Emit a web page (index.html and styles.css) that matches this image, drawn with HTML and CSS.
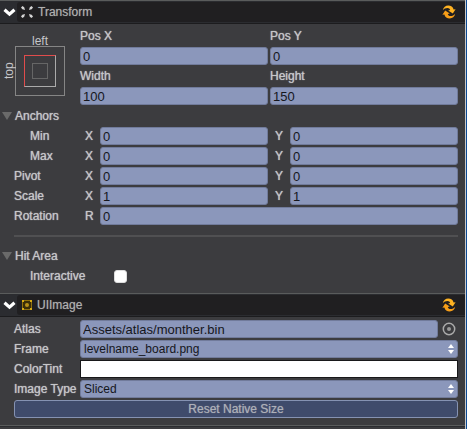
FILE: index.html
```html
<!DOCTYPE html>
<html lang="en">
<head>
<meta charset="utf-8">
<title>Inspector</title>
<link rel="stylesheet" href="styles.css">
</head>
<body>
<svg class="defs" aria-hidden="true">
  <symbol id="chevron" viewBox="0 0 13 9"><path d="M1.500 1.800 6.500 6.200l5-4.400" fill="none" stroke="#fff" stroke-width="3.200"/></symbol>
  <symbol id="refresh" viewBox="0 0 14 14">
    <path d="M.8 5.200C1.400 2.300 3.600.6 6.200.6c2.800 0 4.900 1.400 5.400 4l2-.3-2.800 4.200-4.600-3 2-.4C7.800 3.700 7 2.900 5.500 2.900 3.600 2.900 2 3.700.8 5.200z" fill="#ffb322"/>
    <path d="M13.200 8.800c-.6 2.900-2.800 4.600-5.400 4.600-2.800 0-4.900-1.400-5.400-4l-2 .3 2.800-4.200 4.600 3-2 .4c.4 1.400 1.200 2.200 2.700 2.200 1.900 0 3.500-.8 4.700-2.300z" fill="#f79e18"/>
  </symbol>
</svg>
<main class="inspector">
  <section class="panel">
    <header class="panel-head">
      <button class="toggle" aria-label="Collapse Transform"><svg width="13" height="9"><use href="#chevron"/></svg></button>
      <div class="title-bar">
        <svg width="14" height="14" viewBox="0 0 14 14" fill="#d4d4d4"><path d="M1 2.500 2.500 1l1.700 1.300.8 2.700-2.700-.8zM13 2.500 11.500 1 9.800 2.300 9 5l2.700-.8zM1 11.500 2.500 13l1.700-1.300L5 9l-2.700.8zM13 11.500 11.500 13l-1.700-1.300L9 9l2.700.8z"/></svg>
        <h2>Transform</h2>
        <button class="refresh" aria-label="Reset Transform"><svg width="14" height="14"><use href="#refresh"/></svg></button>
      </div>
    </header>
    <div class="panel-body">
      <div class="layout-block">
        <button class="anchor-preset" aria-label="Anchor preset">
          <span class="anchor-h">left</span>
          <span class="anchor-v">top</span>
          <span class="anchor-box"><span class="anchor-mid"><span class="anchor-core"></span></span></span>
        </button>
        <div class="pair-grid">
          <label for="px">Pos X</label><label for="py">Pos Y</label>
          <input id="px" value="0"><input id="py" value="0">
          <label for="w">Width</label><label for="h">Height</label>
          <input id="w" value="100"><input id="h" value="150">
        </div>
      </div>
      <div class="fold"><i class="triangle"></i><h3>Anchors</h3></div>
      <div class="row sub"><span class="name">Min</span>
        <div class="axes"><label class="axis"><span>X</span><input value="0"></label><label class="axis"><span>Y</span><input value="0"></label></div></div>
      <div class="row sub"><span class="name">Max</span>
        <div class="axes"><label class="axis"><span>X</span><input value="0"></label><label class="axis"><span>Y</span><input value="0"></label></div></div>
      <div class="row"><span class="name">Pivot</span>
        <div class="axes"><label class="axis"><span>X</span><input value="0"></label><label class="axis"><span>Y</span><input value="0"></label></div></div>
      <div class="row"><span class="name">Scale</span>
        <div class="axes"><label class="axis"><span>X</span><input value="1"></label><label class="axis"><span>Y</span><input value="1"></label></div></div>
      <div class="row"><span class="name">Rotation</span>
        <div class="axes"><label class="axis"><span>R</span><input value="0"></label></div></div>
      <hr>
      <div class="fold"><i class="triangle"></i><h3>Hit Area</h3></div>
      <div class="row sub check"><label class="name" for="inter">Interactive</label><input type="checkbox" id="inter"></div>
    </div>
  </section>
  <section class="panel">
    <header class="panel-head">
      <button class="toggle" aria-label="Collapse UIImage"><svg width="13" height="9"><use href="#chevron"/></svg></button>
      <div class="title-bar">
        <svg width="13" height="12" viewBox="0 0 13 12"><path d="M2.500 1.500h9v9h-9z" fill="#3a2e08" stroke="#8f7010"/><path d="M2 1h2v2H2zM10 1h2v2h-2zM2 9h2v2H2zM10 9h2v2h-2z" fill="#d8ac14"/><circle cx="7" cy="6" r="2" fill="#b8901a"/></svg>
        <h2>UIImage</h2>
        <button class="refresh" aria-label="Reset UIImage"><svg width="14" height="14"><use href="#refresh"/></svg></button>
      </div>
    </header>
    <div class="panel-body">
      <div class="row"><label class="name" for="atlas">Atlas</label><input id="atlas" class="asset" value="Assets/atlas/monther.bin">
        <button class="pick" aria-label="Select asset"><svg width="14" height="14" viewBox="0 0 14 14"><circle cx="7" cy="7" r="5.700" fill="none" stroke="#aaa" stroke-width="1.500"/><circle cx="7" cy="7" r="2" fill="#999"/></svg></button></div>
      <div class="row"><label class="name" for="frame">Frame</label>
        <div class="select"><select id="frame"><option>levelname_board.png</option></select><i class="arrows"></i></div></div>
      <div class="row"><span class="name">ColorTint</span><button class="swatch" aria-label="ColorTint"></button></div>
      <div class="row"><label class="name" for="type">Image Type</label>
        <div class="select"><select id="type"><option>Sliced</option></select><i class="arrows"></i></div></div>
      <button class="action">Reset Native Size</button>
    </div>
  </section>
  <div class="panel-end"></div>
</main>
</body>
</html>
```
FILE: styles.css
```css
* { box-sizing: border-box; }
body {
  margin: 0;
  background: #3c3c3f;
  color: #c6c6c9;
  font: 12px/20px "Liberation Sans", Arial, sans-serif;
}
.defs { display: none; }
.inspector {
  min-height: 100vh;
  border-right: 1px solid #0c4a94;
  box-shadow: inset -1px 0 #c8c8c8;
  padding-right: 1px;
}
button { font: inherit; color: inherit; background: none; border: 0; padding: 0; }
h2, h3 { margin: 0; font-size: 12px; font-weight: normal; }
svg { display: block; flex: none; }

.panel-head {
  display: flex;
  height: 24px;
  border-top: 1px solid #5a5c5c;
  border-bottom: 1px solid #1c1c1e;
  background: #2b2c30;
}
.toggle { width: 17px; padding-left: 3px; }
.title-bar {
  flex: 1;
  display: flex;
  align-items: center;
  gap: 4px;
  padding: 0 9px 0 3px;
  margin: 1px 0;
  background: #201f21;
  border-radius: 3px 0 0 3px;
}
.title-bar h2 { flex: 1; color: #b0b0b0; text-shadow: 0 0 1px rgba(176, 176, 176, 0.6); }

.panel-body { padding: 2px 7px 7px 0; }
h3, label, .name { text-shadow: 0 0 1px #c6c6c9; }
label, .name { white-space: nowrap; }

input:not([type="checkbox"]), select {
  width: 100%;
  min-width: 0;
  height: 18px;
  margin: 0;
  padding: 0 2px;
  border: 1px solid #717b9b;
  border-radius: 3px;
  background: #8b97bb;
  color: #15161c;
  font: 13px/16px "Liberation Sans", Arial, sans-serif;
}
.layout-block { display: flex; }
.pair-grid {
  flex: 1;
  display: grid;
  grid-template-columns: 1fr 1fr;
  grid-auto-rows: 20px;
  column-gap: 2px;
  align-items: center;
}
.anchor-preset {
  width: 80px;
  display: grid;
  grid-template-columns: 15px 50px;
  grid-template-rows: 20px 50px;
  line-height: 16px;
  align-content: start;
}
.anchor-preset span { display: block; }
.anchor-h { grid-column: 2; padding-top: 7px; }
.anchor-v {
  writing-mode: vertical-rl;
  transform: rotate(180deg);
  justify-self: end;
  line-height: 12px;
}
.anchor-box { border: 1px solid #858585; padding: 8px; }
.anchor-mid {
  height: 32px;
  border: 1px solid #aaa;
  border-left-color: #e04c4c;
  border-top-color: #e04c4c;
  padding: 7px;
}
.anchor-core { height: 16px; border: 1px solid #666; }

.fold { display: flex; align-items: center; height: 20px; gap: 3px; padding-left: 2px; }
.triangle {
  border: 5px solid transparent;
  border-top: 8px solid #6a6a6a;
  border-bottom: 0;
}
.row { display: flex; align-items: center; height: 20px; }
.name { width: 80px; flex: none; padding-left: 14px; }
.sub .name { padding-left: 30px; }
.axes { flex: 1; display: grid; grid-auto-flow: column; grid-auto-columns: minmax(0, 1fr); gap: 2px; }
.axis { display: flex; align-items: center; padding-left: 5px; }
.axis span { width: 15px; flex: none; }
hr { margin: 9px 0 9px 14px; border: 0; border-top: 2px solid #505052; }
.check .name { width: 114px; }
.check input {
  appearance: none;
  width: 13px;
  height: 13px;
  margin: 0;
  border: 1px solid #ddd;
  border-radius: 3px;
  background: #fff;
}
#atlas { flex: 1; }
.pick { margin: 0 2px 0 4px; }
.select { position: relative; flex: 1; display: flex; }
select { appearance: none; }
.row .select select { font-size: 12px; padding-left: 3px; }
.arrows {
  position: absolute;
  right: 4px;
  top: 4px;
  display: grid;
  gap: 2px;
}
.arrows::before, .arrows::after { content: ""; border: 3px solid transparent; }
.arrows::before { border-top: 0; border-bottom: 4px solid #fff; }
.arrows::after { border-bottom: 0; border-top: 4px solid #fff; }
.swatch { flex: 1; height: 18px; background: #fff; border: 1px solid #18181a; }
.action {
  display: block;
  width: calc(100% - 14px);
  height: 18px;
  margin: 1px 0 0 14px;
  border: 1px solid #8592b2;
  border-radius: 3px;
  background: #3f4b6b;
  color: #aeb0b8;
  line-height: 16px;
  text-shadow: 0 0 1px rgba(174, 176, 184, 0.7);
}
.panel-end { border-top: 1px solid #5a5c5c; border-bottom: 1px solid #2b2c30; }
```
